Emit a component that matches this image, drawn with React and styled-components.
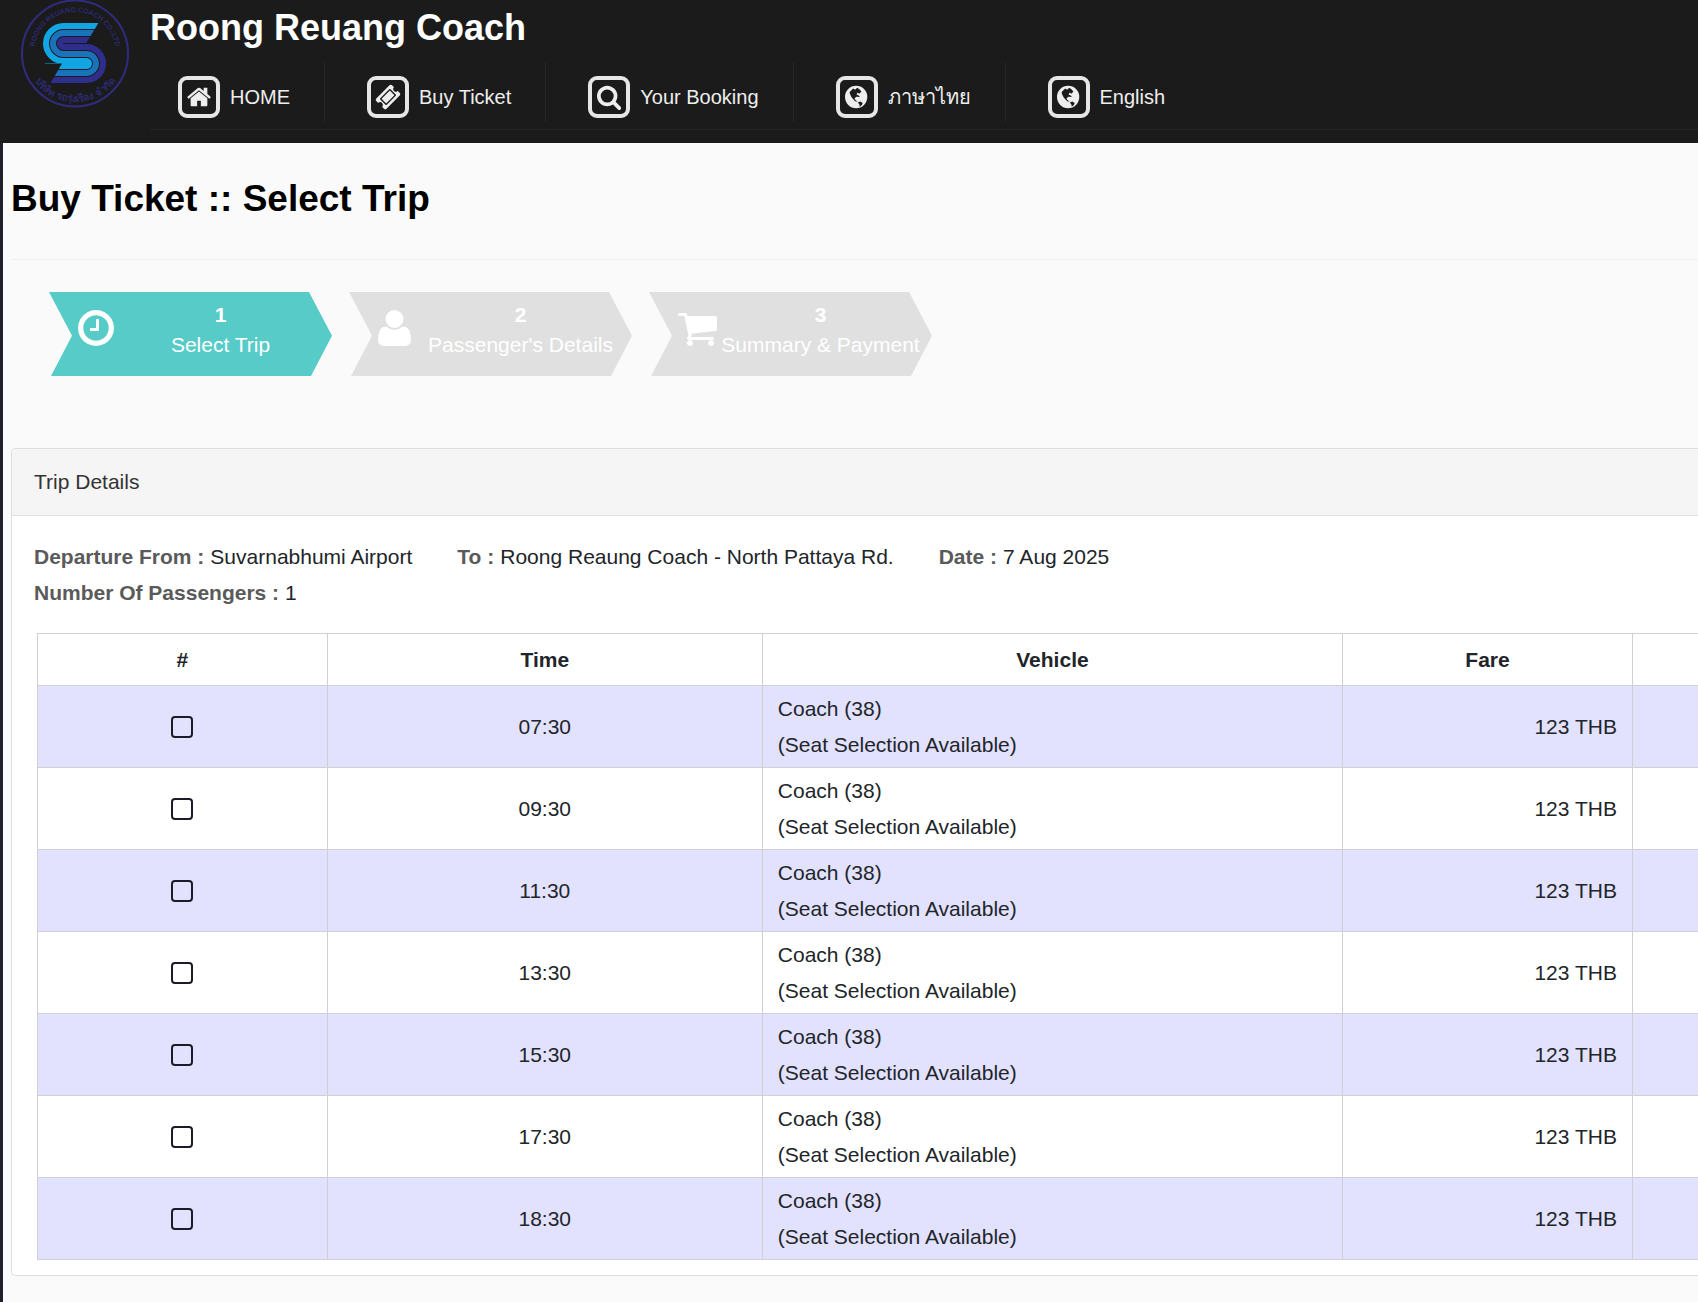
import React, { useState } from "react";
import styled, { createGlobalStyle, css } from "styled-components";

const GlobalStyle = createGlobalStyle`
    * {
        box-sizing: border-box;
    }
    body {
        margin: 0;
        background: #fafafa;
        color: #212529;
        font-family: "Liberation Sans", Arial, sans-serif;
        font-size: 21px;
        line-height: 36px;
        overflow-x: hidden;
    }
`;

// each drawing starts at x and is w wide, on a 1792 unit tall grid
const icons = {
    home: { x: 0, w: 1792, d: "M1472 992v480q0 26-19 45t-45 19h-384v-384h-256v384h-384q-26 0-45-19t-19-45v-480q0-1 .5-3t.5-3l575-474 575 474q1 2 1 6zm223-69l-62 74q-8 9-21 11h-3q-13 0-21-7l-692-577-692 577q-12 8-24 7-13-2-21-11l-62-74q-8-10-7-23.5t11-21.5l719-599q32-26 76-26t76 26l244 204v-195q0-14 9-23t23-9h192q14 0 23 9t9 23v408l219 182q10 8 11 21.5t-7 23.5z" },
    ticket: { x: 0, w: 1792, d: "M1024 452l316 316-572 572-316-316zm-211 979l618-618q19-19 19-45t-19-45l-362-362q-18-18-45-18t-45 18l-618 618q-19 19-19 45t19 45l362 362q18 18 45 18t45-18zm889-637l-907 908q-37 37-90.5 37t-90.5-37l-126-126q56-56 56-136t-56-136-136-56-136 56l-125-126q-37-37-37-90.5t37-90.5l907-906q37-37 90.5-37t90.5 37l125 125q-56 56-56 136t56 136 136 56 136-56l126 125q37 37 37 90.5t-37 90.5z" },
    search: { x: 64, w: 1664, d: "M1216 832q0-185-131.5-316.5t-316.5-131.5-316.5 131.5-131.5 316.5 131.5 316.5 316.5 131.5 316.5-131.5 131.5-316.5zm512 832q0 52-38 90t-90 38q-54 0-90-38l-343-342q-179 124-399 124-143 0-273.5-55.5t-225-150-150-225-55.5-273.5 55.5-273.5 150-225 225-150 273.5-55.5 273.5 55.5 225 150 150 225 55.5 273.5q0 220-124 399l343 343q37 37 37 90z" },
    globe: { x: 128, w: 1536, d: "M896 128a768 768 0 1 0 0 1536a768 768 0 1 0 0-1536zM693 309L829 399L964 264L1145 377L1258 535L1100 670L1009 580L919 716L1100 806L1145 896L919 880L783 987L830 1090L1000 1230L829 1190L603 942L500 761L440 560L603 399zM1009 1281L1190 1213L1348 1304L1290 1450L1145 1560L1122 1416z" },
    clock: { x: 128, w: 1536, d: "M1024 544v448q0 14-9 23t-23 9h-320q-14 0-23-9t-9-23v-64q0-14 9-23t23-9h224v-352q0-14 9-23t23-9h64q14 0 23 9t9 23zm416 352q0-148-73-273t-198-198-273-73-273 73-198 198-73 273 73 273 198 198 273 73 273-73 198-198 73-273zm224 0q0 209-103 385.5t-279.5 279.5-385.5 103-385.5-103-279.5-279.5-103-385.5 103-385.5 279.5-279.5 385.5-103 385.5 103 279.5 279.5 103 385.5z" },
    user: { x: 192, w: 1408, d: "M1600 1405q0 120-73 189.5t-194 69.5h-874q-121 0-194-69.5t-73-189.5q0-53 3.5-103.5t14-109 26.5-108.5 43-97.5 62-81 85.5-53.5 111.5-20q9 0 42 21.5t74.5 48 108 48 133.5 21.5 133.5-21.5 108-48 74.5-48 42-21.5q61 0 111.5 20t85.5 53.5 62 81 43 97.5 26.5 108.5 14 109 3.5 103.5zm-320-893q0 159-112.5 271.5t-271.5 112.5-271.5-112.5-112.5-271.5 112.5-271.5 271.5-112.5 271.5 112.5 112.5 271.5z" },
    cart: { x: 64, w: 1664, d: "M704 1536q0 52-38 90t-90 38-90-38-38-90 38-90 90-38 90 38 38 90zm896 0q0 52-38 90t-90 38-90-38-38-90 38-90 90-38 90 38 38 90zm128-1088v512q0 24-16.5 42.5t-40.5 21.5l-1044 122q13 60 13 70 0 16-24 64h920q26 0 45 19t19 45-19 45-45 19h-1024q-26 0-45-19t-19-45q0-11 8-31.5t16-36 21.5-40 15.5-29.5l-177-823h-204q-26 0-45-19t-19-45 19-45 45-19h256q16 0 28.5 6.5t19.5 15.5 13 24.5 8 26 5.5 29.5 4.5 26h1201q26 0 45 19t19 45z" },
};

const menuItems = [
    { icon: "home", label: "HOME" },
    { icon: "ticket", label: "Buy Ticket" },
    { icon: "search", label: "Your Booking" },
    { icon: "globe", label: "ภาษาไทย" },
    { icon: "globe", label: "English" },
];

const steps = [
    { icon: "clock", label: "Select Trip" },
    { icon: "user", label: "Passenger's Details" },
    { icon: "cart", label: "Summary & Payment" },
];

const details = [
    { name: "Departure From", value: "Suvarnabhumi Airport" },
    { name: "To", value: "Roong Reaung Coach - North Pattaya Rd." },
    { name: "Date", value: "7 Aug 2025" },
];

const trips = ["07:30", "09:30", "11:30", "13:30", "15:30", "17:30", "18:30"];

const Header = styled.header`
    display: flex;
    height: 143px;
    background: #1b1b1b;
`;

const LogoLink = styled.a`
    flex: none;
    width: 150px;
    padding-left: 20px;
    svg {
        display: block;
    }
`;

const HeaderMain = styled.div`
    flex: 1;
    min-width: 0;
`;

const Brand = styled.div`
    height: 62px;
    color: #fff;
    font-size: 36px;
    font-weight: bold;
    line-height: 56px;
`;

const Nav = styled.nav`
    display: flex;
    height: 68px;
    border-bottom: 1px solid #272727;
`;

const NavLink = styled.a`
    display: flex;
    align-items: center;
    gap: 10px;
    height: 60px;
    padding: 10px 34px 0 42px;
    border-right: 1px solid #262626;
    color: #eee;
    font-size: 20px;
    line-height: 30px;
    text-decoration: none;
    white-space: nowrap;
    &:first-child {
        padding-left: 28px;
    }
    &:last-child {
        border-right: none;
    }
`;

const NavIcon = styled.span`
    display: flex;
    align-items: center;
    justify-content: center;
    width: 42px;
    height: 42px;
    border: 4px solid #e6e6e6;
    border-radius: 9px;
`;

const Page = styled.main`
    padding: 0 0 26px 8px;
    border-left: 3px solid #211f29;
`;

const Title = styled.h1`
    margin: 0;
    padding: 28px 0 33px;
    border-bottom: 1px solid #eee;
    color: #000;
    font-size: 37px;
    line-height: 55px;
`;

const Steps = styled.ol`
    display: flex;
    gap: 17px;
    margin: 0;
    padding: 32px 0 72px 38px;
    list-style: none;
`;

const Step = styled.li`
    display: flex;
    width: 283px;
    height: 84px;
    color: #fff;
    clip-path: polygon(0 0, 260px 0, 100% 52%, 262px 100%, 2px 100%, 23px 52%);
    ${props => props.$active ? css`
        background: #57cbc7;
    ` : css`
        background: #e0e0e0;
    `}
`;

const StepIcon = styled.span`
    flex: none;
    width: 60px;
    padding: 15px 0 0 29px;
    svg {
        display: block;
    }
`;

const StepText = styled.span`
    flex: 1;
    padding-top: 8px;
    line-height: 30px;
    text-align: center;
    white-space: nowrap;
    b {
        display: block;
    }
`;

const Card = styled.section`
    border: 1px solid #dedede;
    border-right: none;
    border-radius: 5px 0 0 5px;
    background: #fff;
`;

const CardTitle = styled.h2`
    margin: 0;
    padding: 15px 22px;
    border-bottom: 1px solid #dedede;
    border-radius: 5px 0 0 0;
    background: #f5f5f5;
    color: #333;
    font-size: 21px;
    font-weight: normal;
`;

const Details = styled.dl`
    display: flex;
    flex-wrap: wrap;
    column-gap: 45px;
    margin: 0;
    padding: 23px 22px 22px;
    div {
        display: flex;
        gap: 6px;
    }
    div:last-child {
        flex-basis: 100%;
    }
    dt {
        color: #5a5a5a;
        font-weight: bold;
    }
    dd {
        margin: 0;
    }
`;

const Table = styled.table`
    width: calc(100% - 25px);
    margin: 0 0 15px 25px;
    border-collapse: collapse;
    table-layout: fixed;
    th, td {
        border: 1px solid #d0d0d4;
        padding: 5px 15px 4px;
    }
    th:last-child, td:last-child {
        border-right: none;
    }
    th {
        height: 52px;
    }
`;

const HeadCell = styled.th`
    width: ${props => props.$width};
`;

const TripRow = styled.tr`
    height: 82px;
    &:nth-child(odd) {
        background: #e2e2ff;
    }
`;

const Cell = styled.td`
    text-align: ${props => props.$align || "left"};
`;

const Check = styled.input`
    display: block;
    width: 22px;
    height: 22px;
    margin: 0 auto;
    appearance: none;
    border: 2px solid #1c1c28;
    border-radius: 4px;
    &:checked {
        background: #57cbc7;
    }
`;

const Icon = ({ name, size }) => {
    const { x, w, d } = icons[name];
    return (
        <svg width={size * w / 1792} height={size} viewBox={`${x} 0 ${w} 1792`} fill="currentColor" aria-hidden="true">
            <path fillRule="evenodd" d={d} />
        </svg>
    );
};

const Logo = () => (
    <svg width="110" height="109" viewBox="0 0 110 109" fill="none">
        <defs>
            <path id="arc-top" d="M14 53A41 41 0 0 1 96 53" />
            <path id="arc-bottom" d="M6 53A49 49 0 0 0 104 53" />
            <clipPath id="slant">
                <path d="M20 22H79L66 43.5H90V84H30L42 63.5H20z" />
            </clipPath>
        </defs>
        <circle cx="55" cy="53.5" r="53" stroke="#2f2c80" strokeWidth="2" />
        <g fill="#2b2970" fontWeight="bold" textAnchor="middle">
            <text fontSize="7"><textPath href="#arc-top" startOffset="50%">ROONG REUANG COACH CO.,LTD</textPath></text>
            <text fontSize="10"><textPath href="#arc-bottom" startOffset="50%">บริษัท รถรุ่งเรือง จำกัด</textPath></text>
        </g>
        <g strokeWidth="6" clipPath="url(#slant)">
            <path d="M82 26H43.5a17.5 17.5 0 0 0 0 35H66.5a2.5 2.5 0 0 1 0 5H25" stroke="#12a5e3" />
            <path d="M82 33H43.5a10.5 10.5 0 0 0 0 21H66.5a9.5 9.5 0 0 1 0 19H25" stroke="#1a72bb" />
            <path d="M82 40H43.5a3.5 3.5 0 0 0 0 7H66.5a16.5 16.5 0 0 1 0 33H25" stroke="#302e8c" />
        </g>
    </svg>
);

const App = () => {
    const [selected, setSelected] = useState("");

    return (
        <>
            <GlobalStyle />
            <Header>
                <LogoLink href="#" aria-label="Roong Reuang Coach"><Logo /></LogoLink>
                <HeaderMain>
                    <Brand>Roong Reuang Coach</Brand>
                    <Nav>
                        {menuItems.map((item) => (
                            <NavLink href="#" key={item.label}>
                                <NavIcon><Icon name={item.icon} size={26} /></NavIcon>
                                {item.label}
                            </NavLink>
                        ))}
                    </Nav>
                </HeaderMain>
            </Header>
            <Page>
                <Title>Buy Ticket :: Select Trip</Title>
                <Steps>
                    {steps.map((step, index) => (
                        <Step key={step.label} $active={index === 0}>
                            <StepIcon><Icon name={step.icon} size={42} /></StepIcon>
                            <StepText><b>{index + 1}</b>{step.label}</StepText>
                        </Step>
                    ))}
                </Steps>
                <Card>
                    <CardTitle>Trip Details</CardTitle>
                    <Details>
                        {details.map((item) => (
                            <div key={item.name}>
                                <dt>{item.name} :</dt>
                                <dd>{item.value}</dd>
                            </div>
                        ))}
                        <div>
                            <dt>Number Of Passengers :</dt>
                            <dd>1</dd>
                        </div>
                    </Details>
                    <Table>
                        <thead>
                            <tr>
                                <HeadCell $width="17.45%">#</HeadCell>
                                <HeadCell $width="26.2%">Time</HeadCell>
                                <HeadCell $width="34.95%">Vehicle</HeadCell>
                                <HeadCell $width="17.45%">Fare</HeadCell>
                                <HeadCell />
                            </tr>
                        </thead>
                        <tbody>
                            {trips.map((time) => (
                                <TripRow key={time}>
                                    <Cell $align="center">
                                        <Check
                                            type="checkbox"
                                            aria-label={time}
                                            checked={selected === time}
                                            onChange={() => setSelected(selected === time ? "" : time)}
                                        />
                                    </Cell>
                                    <Cell $align="center">{time}</Cell>
                                    <Cell>Coach (38)<br />(Seat Selection Available)</Cell>
                                    <Cell $align="right">123 THB</Cell>
                                    <Cell />
                                </TripRow>
                            ))}
                        </tbody>
                    </Table>
                </Card>
            </Page>
        </>
    );
};

export default App;
